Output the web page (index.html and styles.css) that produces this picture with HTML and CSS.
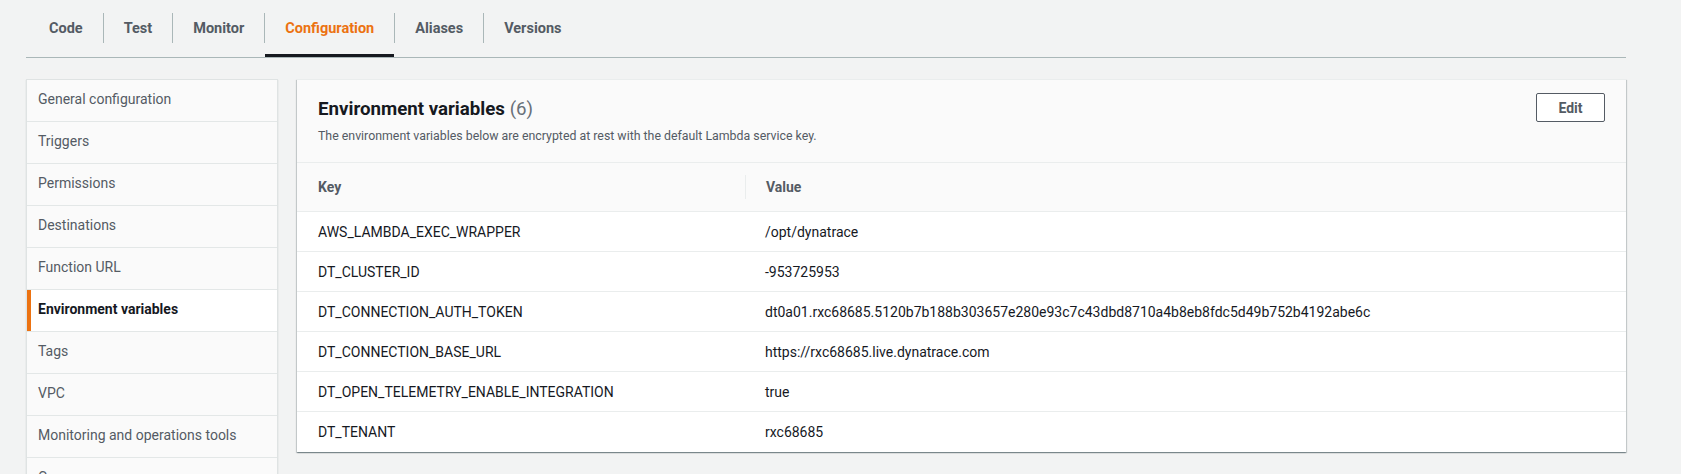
FILE: index.html
```html
<!DOCTYPE html>
<html lang="en">
<head>
<meta charset="utf-8">
<title>Lambda configuration</title>
<link rel="stylesheet" href="styles.css">
</head>
<body>
<div class="page">
  <nav class="tabs">
    <div class="tab tab-first">Code</div><span class="sep"></span>
    <div class="tab">Test</div><span class="sep"></span>
    <div class="tab">Monitor</div><span class="sep"></span>
    <div class="tab tab-active">Configuration</div><span class="sep"></span>
    <div class="tab">Aliases</div><span class="sep"></span>
    <div class="tab">Versions</div>
  </nav>
  <div class="content">
    <aside class="sidenav">
      <div class="nav-item">General configuration</div>
      <div class="nav-item">Triggers</div>
      <div class="nav-item">Permissions</div>
      <div class="nav-item">Destinations</div>
      <div class="nav-item">Function URL</div>
      <div class="nav-item nav-active">Environment variables</div>
      <div class="nav-item">Tags</div>
      <div class="nav-item">VPC</div>
      <div class="nav-item">Monitoring and operations tools</div>
      <div class="nav-item">Concurrency</div>
      <div class="nav-item">Asynchronous invocation</div>
    </aside>
    <section class="panel">
      <header class="panel-header">
        <div class="panel-titles">
          <h2 class="panel-title">Environment variables <span class="count">(6)</span></h2>
          <p class="panel-desc">The environment variables below are encrypted at rest with the default Lambda service key.</p>
        </div>
        <button class="btn">Edit</button>
      </header>
      <div class="table">
        <div class="row head">
          <div class="cell th">Key</div>
          <div class="cell th th-value">Value</div>
        </div>
        <div class="row"><div class="cell">AWS_LAMBDA_EXEC_WRAPPER</div><div class="cell val">/opt/dynatrace</div></div>
        <div class="row"><div class="cell">DT_CLUSTER_ID</div><div class="cell val">-953725953</div></div>
        <div class="row"><div class="cell">DT_CONNECTION_AUTH_TOKEN</div><div class="cell val">dt0a01.rxc68685.5120b7b188b303657e280e93c7c43dbd8710a4b8eb8fdc5d49b752b4192abe6c</div></div>
        <div class="row"><div class="cell">DT_CONNECTION_BASE_URL</div><div class="cell val">https://rxc68685.live.dynatrace.com</div></div>
        <div class="row"><div class="cell">DT_OPEN_TELEMETRY_ENABLE_INTEGRATION</div><div class="cell val">true</div></div>
        <div class="row last"><div class="cell">DT_TENANT</div><div class="cell val">rxc68685</div></div>
      </div>
    </section>
  </div>
</div>
</body>
</html>
```

FILE: styles.css
```css
* { box-sizing: border-box; }

html, body {
  margin: 0;
  background: #f2f3f3;
  font-family: Roboto, "Liberation Sans", Arial, sans-serif;
  color: #16191f;
  overflow: hidden;
}

.page {
  padding: 0 55px 0 26px;
}

/* Tabs */
.tabs {
  display: flex;
  height: 58px;
  border-bottom: 1px solid #aab7b8;
}

.tab {
  display: flex;
  align-items: center;
  padding: 0 20px;
  font-size: 14.5px;
  font-weight: 700;
  color: #545b64;
}

.tab-first { padding-left: 23px; }

.tab-active {
  color: #ec7211;
  box-shadow: inset 0 -3px 0 #16191f;
}

.sep {
  width: 1px;
  height: 30px;
  align-self: center;
  margin-top: -1px;
  background: #aab7b8;
}

/* Content */
.content {
  display: flex;
  align-items: flex-start;
  gap: 19px;
  margin-top: 21px;
}

.sidenav {
  flex: none;
  width: 252px;
  display: flex;
  flex-direction: column;
  gap: 1px;
  background: #e3e7e7;
  border: 1px solid #dfe3e3;
  box-shadow: 0 1px 1px 0 rgba(0, 28, 36, 0.2);
}

.nav-item {
  height: 41px;
  display: flex;
  align-items: center;
  padding-left: 11px;
  padding-bottom: 3px;
  background: #fafafa;
  font-size: 14px;
  color: #545b64;
}

.nav-active {
  background: #ffffff;
  border-left: 4px solid #ec7211;
  padding-left: 7px;
  font-weight: 700;
  color: #16191f;
}

/* Panel */
.panel {
  flex: 1;
  background: #ffffff;
  border-top: 1px solid #eaeded;
  box-shadow: 0 1px 1px 0 rgba(0, 28, 36, 0.3), 1px 1px 1px 0 rgba(0, 28, 36, 0.15), -1px 1px 1px 0 rgba(0, 28, 36, 0.15);
}

.panel-header {
  display: flex;
  justify-content: space-between;
  align-items: flex-start;
  background: #fafafa;
  border-bottom: 1px solid #eaeded;
  padding: 18px 21px 18px 21px;
}

.panel-title {
  margin: 0;
  font-size: 18.7px;
  line-height: 22px;
  font-weight: 700;
  color: #16191f;
}

.count {
  font-weight: 400;
  color: #687078;
}

.panel-desc {
  margin: 8px 0 0;
  font-size: 12.35px;
  line-height: 16px;
  color: #545b64;
}

.btn {
  margin-top: -5px;
  width: 69px;
  height: 29px;
  border: 1px solid #545b64;
  border-radius: 2px;
  background: #ffffff;
  font-family: inherit;
  font-size: 14px;
  font-weight: 700;
  color: #545b64;
  padding: 0;
}

/* Table */
.row {
  display: grid;
  grid-template-columns: 448px 1fr;
  align-items: center;
  height: 40px;
  border-bottom: 1px solid #eaeded;
  font-size: 14px;
  color: #16191f;
}

.row.last { border-bottom: none; height: 40px; }

.row.head {
  height: 49px;
  background: #fafafa;
}

.cell {
  padding-left: 21px;
  white-space: nowrap;
}

.cell.val { padding-left: 20px; }

.th {
  font-weight: 700;
  color: #545b64;
  height: 24px;
  display: flex;
  align-items: center;
}

.th-value {
  border-left: 1px solid #eaeded;
  padding-left: 20px;
}
```
